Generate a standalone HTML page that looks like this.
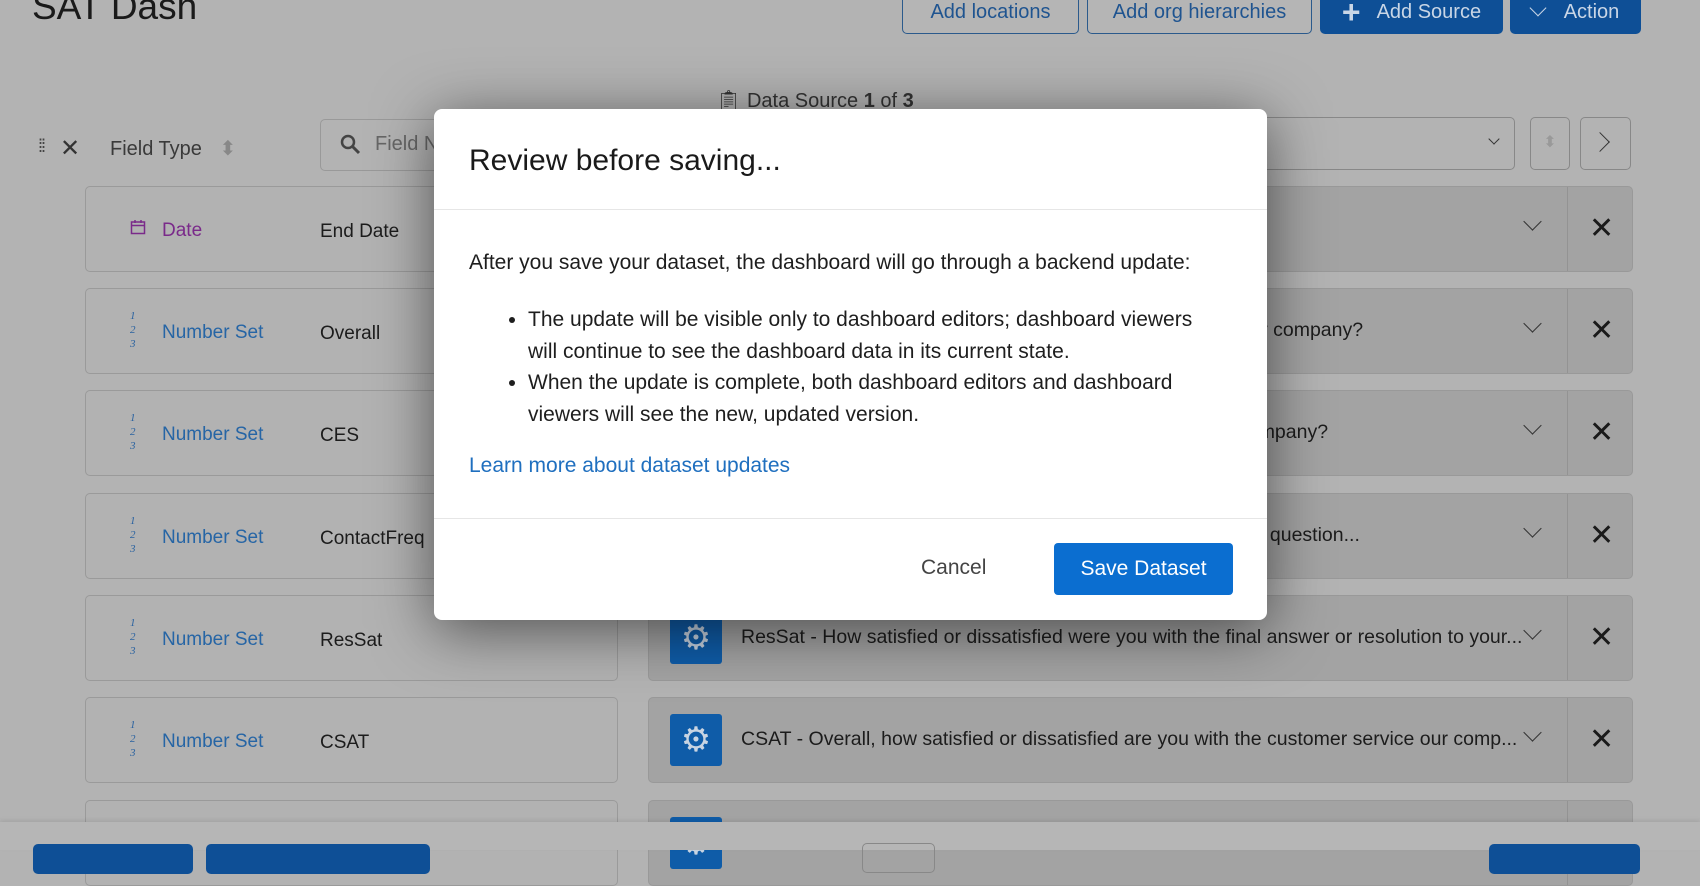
<!DOCTYPE html>
<html><head><meta charset="utf-8"><style>
*{box-sizing:border-box;margin:0;padding:0}
body{width:1700px;height:850px;overflow:hidden;background:#b3b3b3;font-family:"Liberation Sans",sans-serif;position:relative;color:#1e1e1e}
.abs{position:absolute}
.btn{position:absolute;border-radius:5px;font-size:20px;display:flex;align-items:center;justify-content:center}
.ob{border:1.5px solid #2b5a8c;color:#1f5490;background:#b5b5b5}
.bb{background:#0e4f96;color:#c9d6e6}
.lc{position:absolute;left:85px;width:533px;height:86px;border:1.5px solid #9a9a9a;border-radius:5px;background:#b2b2b2}
.rc{position:absolute;left:648px;width:985px;height:86px;border:1px solid #999;border-radius:5px;background:#a3a3a3}
.rc .div{position:absolute;left:918px;top:0;bottom:0;border-left:1px solid #939393}
.rc .x{position:absolute;left:940px;top:24px;font-size:30px;color:#1a1a1a;font-family:"DejaVu Sans",sans-serif}
.rc .chev{position:absolute;left:877px;top:28px;width:13px;height:13px;border-right:1.5px solid #333;border-bottom:1.5px solid #333;transform:rotate(45deg)}
.rc .gear{position:absolute;left:21px;top:16px;width:52px;height:52px;background:#0f5ca8;border-radius:3px;color:#c8d4e2;font-size:34px;display:flex;align-items:center;justify-content:center;font-family:"DejaVu Sans",sans-serif}
.rc .t{position:absolute;left:92px;top:30px;font-size:19.5px;color:#1c1c1c;white-space:nowrap}
.num{position:absolute;left:44px;top:20px;font-family:"Liberation Serif",serif;font-style:italic;font-size:11px;line-height:14px;color:#2a62a0}
.ft{position:absolute;left:76px;font-size:19px;color:#2665a5}
.fn{position:absolute;left:234px;font-size:19px;color:#1c1c1c}
.modal{position:absolute;left:434px;top:109px;width:833px;height:511px;background:#fff;border-radius:8px;box-shadow:0 10px 60px rgba(0,0,0,.55);z-index:5}
</style></head><body>
<div class="abs" style="left:32px;top:-14px;font-size:37px;color:#1a1a1a">SAT Dash</div>
<div class="btn ob" style="left:902px;top:-10px;width:177px;height:44px">Add locations</div>
<div class="btn ob" style="left:1087px;top:-10px;width:225px;height:44px">Add org hierarchies</div>
<div class="btn bb" style="left:1320px;top:-10px;width:183px;height:44px"><span style="font-size:32px;margin-right:16px;font-weight:bold">+</span>Add Source</div>
<div class="btn bb" style="left:1510px;top:-10px;width:131px;height:44px"><span style="display:inline-block;width:12px;height:12px;border-right:1.5px solid #c9d6e6;border-bottom:1.5px solid #c9d6e6;transform:rotate(45deg);margin:-8px 20px 0 0"></span>Action</div>

<div class="abs" style="left:716px;top:88px;font-size:20px;color:#333">&#x1F4CB;&#xFE0E; Data Source <b>1</b> of <b>3</b></div>

<div class="abs" style="left:38px;top:136px;font-size:18px;color:#444;letter-spacing:-2px">⁞⁞</div>
<div class="abs" style="left:60px;top:134px;font-size:24px;color:#333">✕</div>
<div class="abs" style="left:110px;top:136px;font-size:20px;color:#3a3a3a">Field Type <span style="color:#888;margin-left:12px">⬍</span></div>
<div class="abs" style="left:320px;top:119px;width:200px;height:52px;border:1.5px solid #999;border-radius:5px;font-size:20px;color:#666;padding:13px 0 0 54px">Field N</div>
<svg class="abs" style="left:340px;top:134px" width="22" height="22" viewBox="0 0 22 22"><circle cx="8" cy="8" r="6" fill="none" stroke="#444" stroke-width="2.5"/><path d="M12 12l7 7" stroke="#444" stroke-width="3"/></svg>
<div class="abs" style="left:1100px;top:117px;width:415px;height:53px;border:1.5px solid #888;border-radius:5px"></div>
<div class="abs" style="left:1490px;top:135px;width:8px;height:8px;border-right:1.5px solid #333;border-bottom:1.5px solid #333;transform:rotate(45deg)"></div>
<div class="abs" style="left:1530px;top:117px;width:40px;height:53px;border:1.5px solid #888;border-radius:5px;color:#999;text-align:center;padding-top:14px">⬍</div>
<div class="abs" style="left:1580px;top:117px;width:51px;height:53px;border:1.5px solid #888;border-radius:5px"></div>
<div class="abs" style="left:1593px;top:135px;width:14px;height:14px;border-right:1.5px solid #333;border-top:1.5px solid #333;transform:rotate(45deg)"></div>

<div class="lc" style="top:186px"><svg class="abs" style="left:44px;top:32px" width="16" height="16" viewBox="0 0 16 16"><rect x="1.5" y="3" width="13" height="11.5" fill="none" stroke="#7a2a8a" stroke-width="1.5"/><path d="M1.5 6.5h13M5 1v3M11 1v3" stroke="#7a2a8a" stroke-width="1.5"/></svg><span class="ft" style="top:33px;color:#7a2a8a">Date</span><span class="fn" style="top:34px">End Date</span></div>
<div class="lc" style="top:288px"><div class="num">1<br>2<br>3</div><span class="ft" style="top:33px">Number Set</span><span class="fn" style="top:34px">Overall</span></div>
<div class="lc" style="top:390px"><div class="num">1<br>2<br>3</div><span class="ft" style="top:33px">Number Set</span><span class="fn" style="top:34px">CES</span></div>
<div class="lc" style="top:493px"><div class="num">1<br>2<br>3</div><span class="ft" style="top:33px">Number Set</span><span class="fn" style="top:34px">ContactFreq</span></div>
<div class="lc" style="top:595px"><div class="num">1<br>2<br>3</div><span class="ft" style="top:33px">Number Set</span><span class="fn" style="top:34px">ResSat</span></div>
<div class="lc" style="top:697px"><div class="num">1<br>2<br>3</div><span class="ft" style="top:33px">Number Set</span><span class="fn" style="top:34px">CSAT</span></div>
<div class="lc" style="top:800px"></div>

<div class="rc" style="top:186px"><div class="chev"></div><div class="div"></div><div class="x">✕</div></div>
<div class="rc" style="top:288px"><div class="gear">⚙</div><div class="t">Overall - How satisfied or dissatisfied are you overall with our company?</div><div class="chev"></div><div class="div"></div><div class="x">✕</div></div>
<div class="rc" style="top:390px"><div class="gear">⚙</div><div class="t">CES - How easy or difficult was it to do business with our company?</div><div class="chev"></div><div class="div"></div><div class="x">✕</div></div>
<div class="rc" style="top:493px"><div class="gear">⚙</div><div class="t">ContactFreq - How often do you interact directly with specific question...</div><div class="chev"></div><div class="div"></div><div class="x">✕</div></div>
<div class="rc" style="top:595px"><div class="gear">⚙</div><div class="t">ResSat - How satisfied or dissatisfied were you with the final answer or resolution to your...</div><div class="chev"></div><div class="div"></div><div class="x">✕</div></div>
<div class="rc" style="top:697px"><div class="gear">⚙</div><div class="t">CSAT - Overall, how satisfied or dissatisfied are you with the customer service our comp...</div><div class="chev"></div><div class="div"></div><div class="x">✕</div></div>
<div class="rc" style="top:800px"><div class="gear">⚙</div><div class="div"></div></div>

<div class="abs" style="left:0;top:822px;width:1700px;height:28px;background:#b6b6b6;box-shadow:0 -2px 4px rgba(0,0,0,.08);z-index:2"></div>
<div class="abs" style="left:33px;top:844px;width:160px;height:30px;background:#0e4f96;border-radius:5px;z-index:3"></div>
<div class="abs" style="left:206px;top:844px;width:224px;height:30px;background:#0e4f96;border-radius:5px;z-index:3"></div>
<div class="abs" style="left:862px;top:843px;width:73px;height:30px;border:1.5px solid #888;border-radius:5px;z-index:3"></div>
<div class="abs" style="left:1489px;top:844px;width:151px;height:30px;background:#0e4f96;border-radius:5px;z-index:3"></div>

<div class="modal">
 <div class="abs" style="left:35px;top:35px;font-size:30px;color:#1a1a1a">Review before saving...</div>
 <div class="abs" style="left:0;top:100px;width:833px;border-top:1px solid #e6e6e6"></div>
 <div class="abs" style="left:35px;top:142px;font-size:21px;color:#1e1e1e;white-space:nowrap">After you save your dataset, the dashboard will go through a backend update:</div>
 <ul class="abs" style="left:94px;top:195px;width:680px;font-size:21px;line-height:31.5px;color:#1e1e1e">
  <li>The update will be visible only to dashboard editors; dashboard viewers will continue to see the dashboard data in its current state.</li>
  <li>When the update is complete, both dashboard editors and dashboard viewers will see the new, updated version.</li>
 </ul>
 <div class="abs" style="left:35px;top:345px;font-size:21px;color:#1f6fbf">Learn more about dataset updates</div>
 <div class="abs" style="left:0;top:409px;width:833px;border-top:1px solid #e6e6e6"></div>
 <div class="abs" style="left:487px;top:447px;font-size:21px;color:#444">Cancel</div>
 <div class="abs" style="left:620px;top:434px;width:179px;height:52px;background:#0b6ed0;border-radius:4px;color:#fff;font-size:21px;display:flex;align-items:center;justify-content:center">Save Dataset</div>
</div>
</body></html>
